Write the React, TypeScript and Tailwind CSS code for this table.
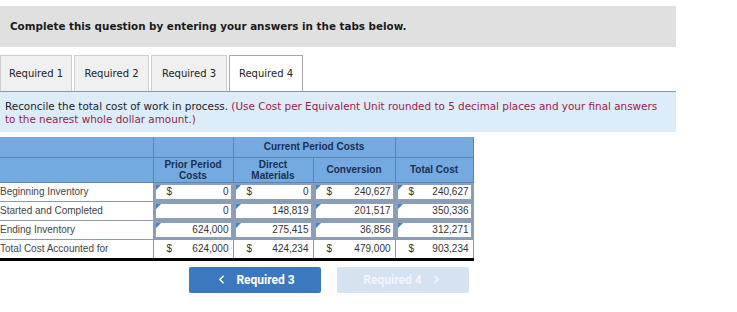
import { ChevronLeft, ChevronRight } from "lucide-react";

type Row = {
  label: string;
  prior: string;
  dm: string;
  conv: string;
  total: string;
  dollar: boolean;
};

const ROWS: Row[] = [
  { label: "Beginning Inventory", prior: "0", dm: "0", conv: "240,627", total: "240,627", dollar: true },
  { label: "Started and Completed", prior: "0", dm: "148,819", conv: "201,517", total: "350,336", dollar: false },
  { label: "Ending Inventory", prior: "624,000", dm: "275,415", conv: "36,856", total: "312,271", dollar: false },
];

const TABS = [
  { name: "Required 1", w: "w-[72px]" },
  { name: "Required 2", w: "w-[75px]" },
  { name: "Required 3", w: "w-[76px]" },
  { name: "Required 4", w: "w-[74px]" },
];

function InputCell({ value, dollar }: { value: string; dollar: boolean }) {
  return (
    <td className="h-[18px] border-b border-r border-[#8a9bb0] p-0">
      <div className="relative flex h-[18px] items-center border-2 border-[#8b9fba] bg-white pl-[11px] pr-[2px]">
        <span className="absolute left-0 top-0 h-0 w-0 border-r-[5px] border-t-[5px] border-r-transparent border-t-[#4d80c0]" />
        <span className="w-3">{dollar ? "$" : ""}</span>
        <span className="ml-auto">{value}</span>
      </div>
    </td>
  );
}

function TotalCell({ value }: { value: string }) {
  return (
    <td className="h-[18px] border-r border-[#8a9bb0] p-0">
      <div className="flex h-[18px] items-center pl-[13px] pr-[4px]">
        <span>$</span>
        <span className="ml-auto">{value}</span>
      </div>
    </td>
  );
}

export default function App() {
  return (
    <div className="h-[312px] w-[737px] overflow-hidden bg-white pt-[6px] font-['DejaVu_Sans',Verdana,sans-serif] text-[#222]">
      <div className="flex h-[41px] w-[676px] items-center bg-[#e0e0e0] px-[10px] text-[10.35px] font-bold text-[#1a1a1a]">
        Complete this question by entering your answers in the tabs below.
      </div>

      <div className="mt-[8px] flex h-[36px] gap-[2px]">
        {TABS.map((tab, i) => (
          <div
            key={tab.name}
            className={`flex items-center justify-center border border-b-0 text-[10px] ${tab.w} ${
              i === 3 ? "border-[#a8a8a8] bg-white" : "border-[#cfcfcf] bg-[#f0f0f0]"
            }`}
          >
            {tab.name}
          </div>
        ))}
      </div>

      <div className="h-[41px] w-[676px] border-t border-[#8797a8] bg-[#dcecf9] pl-[5px] pr-[12px] pt-[8px] text-[10.4px] leading-[12.5px] text-[#222]">
        <p>
          Reconcile the total cost of work in process.{" "}
          <span className="text-[#9b1c4a]">
            (Use Cost per Equivalent Unit rounded to 5 decimal places and your final answers to the nearest whole
            dollar amount.)
          </span>
        </p>
      </div>

      <table className="mt-[5px] w-[473px] table-fixed border-collapse font-['Liberation_Sans',Arial,sans-serif] text-[10px] text-[#333]">
        <colgroup>
          <col className="w-[153px]" />
          <col className="w-[80px]" />
          <col className="w-[80px]" />
          <col className="w-[82px]" />
          <col className="w-[78px]" />
        </colgroup>
        <thead className="bg-[#75aae0] font-bold text-[#1a3050]">
          <tr className="h-[20px]">
            <th className="border border-l-0 border-t-0 border-[#5b84b1]" />
            <th className="border border-t-0 border-[#5b84b1]" />
            <th colSpan={2} className="border border-t-0 border-[#5b84b1] font-bold">
              Current Period Costs
            </th>
            <th className="border border-t-0 border-[#5b84b1]" />
          </tr>
          <tr className="h-[25px] leading-[11px]">
            <th className="border border-l-0 border-[#5b84b1]" />
            <th className="border border-[#5b84b1]">
              Prior Period
              <br />
              Costs
            </th>
            <th className="border border-[#5b84b1]">
              Direct
              <br />
              Materials
            </th>
            <th className="border border-[#5b84b1]">Conversion</th>
            <th className="border border-[#5b84b1]">Total Cost</th>
          </tr>
        </thead>
        <tbody>
          {ROWS.map((row) => (
            <tr key={row.label}>
              <td className="h-[18px] border-b border-r border-[#8a9bb0] p-0 text-[#444]">{row.label}</td>
              <InputCell value={row.prior} dollar={row.dollar} />
              <InputCell value={row.dm} dollar={row.dollar} />
              <InputCell value={row.conv} dollar={row.dollar} />
              <InputCell value={row.total} dollar={row.dollar} />
            </tr>
          ))}
          <tr className="border-b-[3px] border-black">
            <td className="h-[18px] border-r border-[#8a9bb0] p-0 text-[#444]">Total Cost Accounted for</td>
            <TotalCell value="624,000" />
            <TotalCell value="424,234" />
            <TotalCell value="479,000" />
            <TotalCell value="903,234" />
          </tr>
        </tbody>
      </table>

      <div className="ml-[189px] mt-[6px] flex gap-[16px] font-['Roboto',sans-serif] text-[12px] font-bold">
        <button className="flex h-[26px] w-[132px] items-center justify-center gap-[8px] rounded-[2px] bg-[#3c78c0] text-white">
          <ChevronLeft size={13} strokeWidth={3} />
          Required 3
        </button>
        <button className="flex h-[26px] w-[132px] items-center justify-center gap-[8px] rounded-[2px] bg-[#d5e2f0] text-[#f2f6fb]">
          Required 4
          <ChevronRight size={13} strokeWidth={3} />
        </button>
      </div>
    </div>
  );
}
